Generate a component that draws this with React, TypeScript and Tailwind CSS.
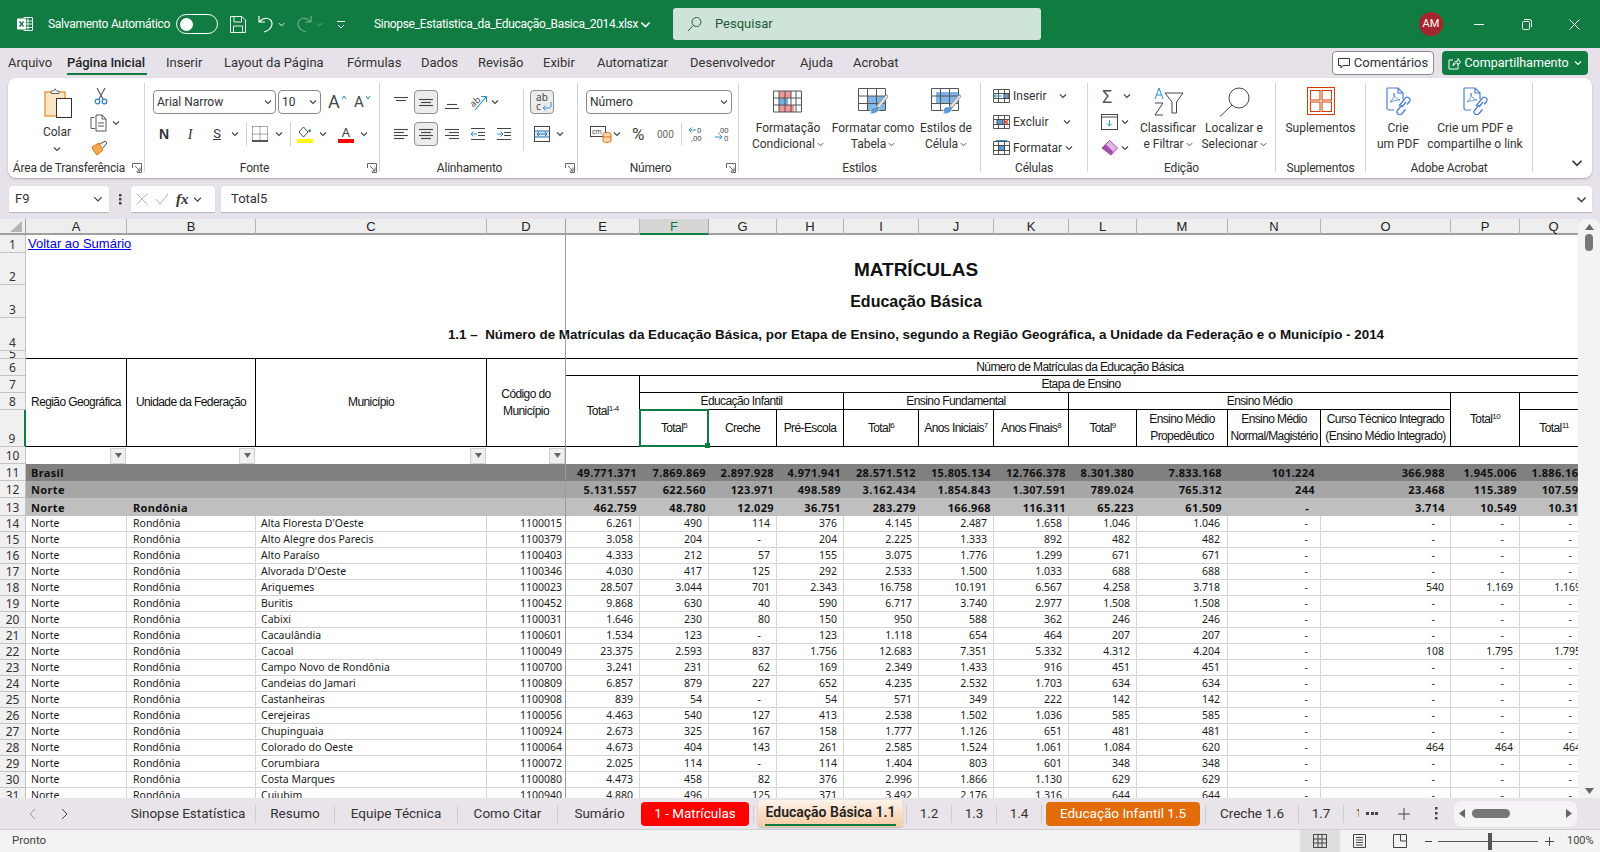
import React from "react";

const Chev = ({ c = "#444", s = 8, className = "" }: { c?: string; s?: number; className?: string }) => (
  <svg width={s} height={s} viewBox="0 0 8 8" className={"inline-block shrink-0 " + className} fill="none" stroke={c} strokeWidth="1.1">
    <path d="M1 2.5 4 5.5 7 2.5" />
  </svg>
);

const Launcher = () => (
  <svg width="10" height="10" viewBox="0 0 10 10" fill="none" stroke="#666" strokeWidth="1" className="absolute bottom-[-1px] right-[2px]">
    <path d="M.5 5V.5H9.5V9.5H5M3 3 8 8M8 4.5V8H4.5" />
  </svg>
);

const Lines = ({ l, c = "#444" }: { l: number[][]; c?: string }) => (
  <svg width="16" height="16" viewBox="0 0 16 16" stroke={c} strokeWidth="1.1" className="shrink-0">
    {l.map((a, i) => (
      <line key={i} x1={a[0]} x2={a[1]} y1={a[2] + 0.5} y2={a[2] + 0.5} />
    ))}
  </svg>
);

const G = ({ w, label, lc = "", launcher, children }: { w: string; label: string; lc?: string; launcher?: boolean; children: React.ReactNode }) => (
  <div className={"relative my-[5px] flex h-[89px] shrink-0 flex-col border-r border-[#d4d4d4] " + w}>
    <div className="min-h-0 flex-1">{children}</div>
    <div className={"-mb-[4px] h-[16px] whitespace-nowrap text-center text-[12px] leading-[16px] tracking-[-0.2px] text-[#333] " + lc}>{label}</div>
    {launcher && <Launcher />}
  </div>
);

const Big = ({ w, icon, t1, t2, chev }: { w: string; icon: React.ReactNode; t1: string; t2?: string; chev?: boolean }) => (
  <div className={"flex shrink-0 flex-col items-center " + w}>
    <div className="flex h-[37px] items-start pt-[4px]">{icon}</div>
    <div className="whitespace-nowrap text-center text-[12px] leading-[16px] text-[#333]">{t1}</div>
    {t2 && (
      <div className="flex items-center gap-[2px] whitespace-nowrap text-center text-[12px] leading-[16px] text-[#333]">
        {t2}
        {chev && <Chev s={7} />}
      </div>
    )}
  </div>
);

const Select = ({ w, t, tc = "" }: { w: string; t: string; tc?: string }) => (
  <div className={"flex h-[24px] shrink-0 items-center justify-between rounded-[4px] border border-[#8a8a8a] bg-white pl-[3px] pr-[3px] text-[12px] " + w + " " + tc}>
    <span className="text-[#333]">{t}</span>
    <Chev />
  </div>
);

const ActiveBtn = ({ children, ml = "" }: { children: React.ReactNode; ml?: string }) => (
  <div className={"flex h-[24px] w-[24px] shrink-0 items-center justify-center rounded-[4px] border border-[#8f8f8f] bg-[#ececec] " + ml}>{children}</div>
);

const GridIcon = ({ fill }: { fill: React.ReactNode }) => (
  <svg width="32" height="28" viewBox="0 0 32 28" fill="none">
    {fill}
    <path d="M1.5 1.5H28.5V23.5H1.5ZM1.5 9H28.5M1.5 16.5H28.5M10.5 1.5V23.5M19.5 1.5V23.5" stroke="#555" />
    <path d="M14 25C12 22 16 19 19 20L30 7 31 9 22 22C22 26 16 27 12 27 13 26.5 14 26 14 25Z" fill="#5b9bd5" stroke="#fff" strokeWidth=".6" />
    <path d="M19.5 19.5 29 8l2 1.5L22 21Z" fill="#e9e9e9" stroke="#777" strokeWidth=".7" />
  </svg>
);

const PdfIcon = () => (
  <svg width="26" height="28" viewBox="0 0 26 28" fill="none" stroke="#4a7fd8" strokeWidth="1.2">
    <path d="M2 1H13L18 6V12M13 1V6H18M9 23H4C3 23 2 22 2 21V1" />
    <path d="M5 15C8 13 10 8 9 6 8 8 11 12 15 13 11 13 8 14 5 15Z" strokeWidth=".8" />
    <path d="M14 19 20 11.5A2.6 2.6 0 0 1 24.5 14.5L22 17.5M17 18 12.5 23.5A2.6 2.6 0 0 0 17 26.5L20.5 22.5M17 20 21 15" strokeWidth="1.3" />
  </svg>
);

const CellRow = ({ icon, t, chevMl }: { icon: React.ReactNode; t: string; chevMl: string }) => (
  <div className="flex h-[26px] items-center">
    {icon}
    <span className="ml-[3px] text-[12px] text-[#333]">{t}</span>
    <Chev className={chevMl} />
  </div>
);

const MiniGrid = ({ children }: { children?: React.ReactNode }) => (
  <svg width="17" height="16" viewBox="0 0 17 16" fill="none" stroke="#444" className="shrink-0">
    <path d="M.5 1.5H16.5V14.5H.5ZM.5 5.5H16.5M.5 10.5H16.5M5.5 1.5V14.5M11.5 1.5V14.5" strokeWidth=".9" />
    {children}
  </svg>
);

const TitleBar = () => (
  <div className="flex h-[48px] shrink-0 items-center bg-[#107c41] text-white">
    <svg width="16" height="16" viewBox="0 0 16 16" fill="none" className="ml-[17px] shrink-0" stroke="#fff">
      <path d="M6.5 1.5H15.5V14.5H6.5M6.5 5H15.5M6.5 8H15.5M6.5 11.5H15.5M11 1.5V14.5" strokeWidth=".9" />
      <rect x=".5" y="3" width="8" height="10" fill="#fff" />
      <path d="M2.5 5.5 6.5 10.5M6.5 5.5 2.5 10.5" stroke="#107c41" strokeWidth="1.4" />
    </svg>
    <span className="ml-[15px] w-[121px] shrink-0 whitespace-nowrap text-[12px] tracking-[-0.28px]">Salvamento Automático</span>
    <div className="ml-[7px] flex h-[20px] w-[42px] shrink-0 items-center rounded-full border border-white pl-[3px]">
      <div className="h-[13px] w-[13px] rounded-full bg-white" />
    </div>
    <svg width="16" height="17" viewBox="0 0 16 17" fill="none" stroke="#fff" className="ml-[12px] shrink-0">
      <path d="M.5.5H12L15.5 4V16.5H.5ZM4 .5V6H11.5V.5M3.5 16.5V10H12.5V16.5" strokeWidth=".9" />
    </svg>
    <svg width="16" height="20" viewBox="0 0 16 20" fill="none" stroke="#fff" strokeWidth="1.2" className="ml-[12px] shrink-0">
      <path d="M1 2V8H7M1.5 8C6 2 14 4 14 10 14 14 10 17 6 18" />
    </svg>
    <Chev c="#fff" s={7} className="ml-[4px]" />
    <svg width="16" height="20" viewBox="0 0 16 20" fill="none" stroke="#6cae8b" strokeWidth="1.2" className="ml-[11px] shrink-0">
      <path d="M15 2V8H9M14.5 8C10 2 2 4 2 10 2 14 6 17 10 18" />
    </svg>
    <Chev c="#6cae8b" s={7} className="ml-[4px]" />
    <svg width="8" height="9" viewBox="0 0 8 9" fill="none" stroke="#fff" className="ml-[14px] shrink-0">
      <path d="M0 1.5H8M1 5 4 8 7 5" />
    </svg>
    <span className="ml-[29px] w-[263px] shrink-0 whitespace-nowrap text-[12px] tracking-[-0.31px]">Sinopse_Estatistica_da_Educação_Basica_2014.xlsx</span>
    <Chev c="#fff" s={11} className="ml-[3px]" />
    <div className="ml-[22px] flex h-[32px] w-[368px] shrink-0 items-center rounded-[3px] bg-[#cfe4d8] pl-[14px] text-[#1b5a3a]">
      <svg width="16" height="16" viewBox="0 0 16 16" fill="none" stroke="#23613f">
        <circle cx="9.5" cy="6" r="4.5" />
        <path d="M6 9.5 1 15" />
      </svg>
      <span className="ml-[12px] text-[13px]">Pesquisar</span>
    </div>
    <div className="ml-[378px] flex h-[24px] w-[24px] shrink-0 items-center justify-center rounded-full bg-[#a4262c] text-[11px]">AM</div>
    <svg width="10" height="10" viewBox="0 0 10 10" stroke="#fff" className="ml-[31px] shrink-0">
      <path d="M0 5.5H10" />
    </svg>
    <svg width="11" height="11" viewBox="0 0 11 11" fill="none" stroke="#fff" className="ml-[37px] shrink-0">
      <rect x="1.5" y="2.5" width="7" height="8" rx="1" />
      <path d="M3 .5H8.5A2 2 0 0 1 10.5 2.5V8" />
    </svg>
    <svg width="11" height="11" viewBox="0 0 11 11" stroke="#fff" className="ml-[37px] shrink-0">
      <path d="M.5.5 10.5 10.5M10.5.5.5 10.5" />
    </svg>
  </div>
);

const menu: [string, string][] = [
  ["Arquivo", "w-[59px]"],
  ["Página Inicial", "w-[99px]"],
  ["Inserir", "w-[58px]"],
  ["Layout da Página", "w-[123px]"],
  ["Fórmulas", "w-[74px]"],
  ["Dados", "w-[57px]"],
  ["Revisão", "w-[65px]"],
  ["Exibir", "w-[54px]"],
  ["Automatizar", "w-[93px]"],
  ["Desenvolvedor", "w-[110px]"],
  ["Ajuda", "w-[53px]"],
  ["Acrobat", "w-[60px]"],
];

const MenuBar = () => (
  <div className="flex h-[30px] shrink-0 items-center pl-[8px] text-[13px] text-[#333]">
    {menu.map(([t, w]) => (
      <div key={t} className={"relative flex h-[30px] shrink-0 items-center whitespace-nowrap " + w}>
        <span className={t === "Página Inicial" ? "font-medium text-[#222]" : ""}>{t}</span>
        {t === "Página Inicial" && <div className="absolute bottom-[3px] left-0 h-[2px] w-[80px] bg-[#107c41]" />}
      </div>
    ))}
    <div className="ml-[419px] flex h-[24px] w-[102px] shrink-0 items-center justify-center gap-[4px] rounded-[4px] border border-[#8a8a8a] bg-white">
      <svg width="12" height="12" viewBox="0 0 12 12" fill="none" stroke="#333">
        <path d="M.5 1.5H11.5V8.5H5L3 11V8.5H.5Z" />
      </svg>
      Comentários
    </div>
    <div className="ml-[8px] flex h-[24px] w-[146px] shrink-0 items-center justify-center gap-[3px] whitespace-nowrap rounded-[4px] bg-[#107c41] text-[12.5px] text-white">
      <svg width="13" height="13" viewBox="0 0 13 13" fill="none" stroke="#fff">
        <path d="M5 3H1V12H10V8M5 9C5 6 7 4 10 4V1.5L12.5 5 10 8V6C8 6 6 7 5 9Z" />
      </svg>
      Compartilhamento
      <Chev c="#fff" s={8} className="ml-[2px]" />
    </div>
  </div>
);

const Ribbon = () => (
  <div className="mx-[8px] flex h-[100px] shrink-0 rounded-[8px] bg-white shadow-[0_1px_2px_rgba(0,0,0,0.25)]">
    <G w="w-[137px]" label="Área de Transferência" lc="pr-[14px]" launcher>
      <div className="flex">
        <div className="ml-[26px] flex w-[46px] flex-col items-center">
          <svg width="30" height="31" viewBox="0 0 30 31" fill="none" className="ml-[1px] mt-[5px]">
            <rect x="2" y="4" width="20" height="24" fill="#fbe6c4" stroke="#e08a1e" strokeWidth="1.2" />
            <path d="M8 5V3H10.5L12 .8 13.5 3H16V5.5H8Z" fill="#fff" stroke="#666" />
            <rect x="13.5" y="10.5" width="15" height="19" fill="#fff" stroke="#333" />
          </svg>
          <span className="mt-[5px] text-[12px] leading-[16px] text-[#333]">Colar</span>
          <Chev className="mt-[5px]" />
        </div>
        <div className="ml-[10px] flex flex-col items-start">
          <svg width="14" height="17" viewBox="0 0 14 17" fill="none" className="ml-[4px] mt-[5px]">
            <path d="M3 0 9 11M11 0 5 11" stroke="#555" strokeWidth="1.1" />
            <circle cx="3.5" cy="13.5" r="2.3" stroke="#2a7fc9" strokeWidth="1.2" />
            <circle cx="10.5" cy="13.5" r="2.3" stroke="#2a7fc9" strokeWidth="1.2" />
          </svg>
          <div className="mt-[9px] flex items-center gap-[5px]">
            <svg width="17" height="18" viewBox="0 0 17 18" fill="none" stroke="#444">
              <path d="M4.5 3.5H1V14.5H5M6 1H12L16 5V17H6ZM12 1V5H16M8 9H14M8 12H14" strokeWidth=".9" />
            </svg>
            <Chev />
          </div>
          <svg width="17" height="16" viewBox="0 0 17 16" className="ml-[1px] mt-[8px]" fill="none">
            <path d="M1 7 8 3 12 10 6 15C4 13 2 10 1 7Z" fill="#f4a84a" stroke="#d8731a" />
            <path d="M9 4 14 1 16 3 12 8" fill="#eee" stroke="#555" />
          </svg>
        </div>
      </div>
    </G>
    <G w="w-[235px]" label="Fonte" lc="pr-[15px]" launcher>
      <div className="mt-[7px] flex items-center pl-[8px]">
        <Select w="w-[123px]" t="Arial Narrow" />
        <div className="ml-[2px]">
          <Select w="w-[43px]" t="10" />
        </div>
        <div className="ml-[7px] flex w-[13px] items-start text-[18px] leading-none text-[#444]">A</div>
        <svg width="6" height="5" viewBox="0 0 6 5" fill="none" stroke="#2a7fc9" className="mb-[10px]"><path d="M1 4 3 1 5 4" /></svg>
        <div className="ml-[7px] w-[11px] text-[15px] leading-none text-[#444]">A</div>
        <svg width="6" height="5" viewBox="0 0 6 5" fill="none" stroke="#2a7fc9" className="mb-[10px]"><path d="M1 1 3 4 5 1" /></svg>
      </div>
      <div className="mt-[8px] flex h-[24px] items-center pl-[8px] text-[#333]">
        <span className="w-[22px] text-center font-['Liberation_Sans'] text-[14px] font-bold">N</span>
        <span className="w-[30px] text-center font-['Liberation_Serif'] text-[14px] italic">I</span>
        <span className="w-[24px] text-center text-[13px] underline">S</span>
        <span className="flex w-[12px] justify-center"><Chev /></span>
        <div className="ml-[5px] h-[24px] w-px bg-[#d4d4d4]" />
        <svg width="16" height="16" viewBox="0 0 16 16" fill="none" className="ml-[5px]">
          <path d="M.5.5H15.5V15M.5 .5V15M8 .5V15M.5 8H15.5" stroke="#555" strokeDasharray="1 1" />
          <path d="M0 15H16" stroke="#111" strokeWidth="1.4" />
        </svg>
        <span className="ml-[5px] flex w-[12px] justify-center"><Chev /></span>
        <div className="ml-[5px] h-[24px] w-px bg-[#d4d4d4]" />
        <div className="ml-[6px] flex w-[16px] flex-col items-center">
          <svg width="14" height="12" viewBox="0 0 14 12" fill="none">
            <path d="M5.5 1 10 6 5.5 11 1 6Z" stroke="#444" />
            <path d="M11 6C9.5 6 11 3 12 3 13.500 4 13 7 11 6Z" fill="#1f6fb5" />
          </svg>
          <div className="mt-[1px] h-[4px] w-[16px] bg-[#ffff00]" />
        </div>
        <span className="ml-[4px] flex w-[12px] justify-center"><Chev /></span>
        <div className="ml-[9px] flex w-[16px] flex-col items-center">
          <span className="h-[12px] font-['Noto_Sans'] text-[13px] leading-[12px] text-[#444]">A</span>
          <div className="mt-[1px] h-[4px] w-[16px] bg-[#ff0000]" />
        </div>
        <span className="ml-[4px] flex w-[12px] justify-center"><Chev /></span>
      </div>
    </G>
    <G w="w-[198px]" label="Alinhamento" lc="pr-[18px]" launcher>
      <div className="flex">
        <div className="w-[143px] shrink-0">
          <div className="mt-[7px] flex h-[24px] items-center pl-[13px]">
            <Lines l={[[1, 15, 3], [3, 13, 6]]} />
            <ActiveBtn ml="ml-[5px]"><Lines l={[[1, 15, 5], [3, 13, 8], [1, 15, 11]]} /></ActiveBtn>
            <div className="ml-[6px]"><Lines l={[[3, 13, 10], [1, 15, 14]]} /></div>
            <svg width="18" height="17" viewBox="0 0 18 17" fill="none" className="ml-[10px]">
              <text x="0" y="11" fontSize="9" fill="#444" transform="rotate(-40 5 8)" fontFamily="Noto Sans">ab</text>
              <path d="M5 16 16 3M11 2.500H16.500V8" stroke="#2a8fd0" strokeWidth="1.1" />
            </svg>
            <Chev className="ml-[3px]" />
          </div>
          <div className="mt-[8px] flex h-[24px] items-center pl-[13px]">
            <Lines l={[[1, 15, 3], [1, 11, 6], [1, 15, 9], [1, 11, 12]]} />
            <ActiveBtn ml="ml-[5px]"><Lines l={[[1, 15, 3], [3, 13, 6], [1, 15, 9], [3, 13, 12]]} /></ActiveBtn>
            <div className="ml-[6px]"><Lines l={[[1, 15, 3], [5, 15, 6], [1, 15, 9], [5, 15, 12]]} /></div>
            <svg width="16" height="16" viewBox="0 0 16 16" fill="none" className="ml-[10px]" stroke="#444">
              <path d="M1 2.500H15M8 6.500H15M8 9.500H15M1 13.500H15" />
              <path d="M7 8H1M3.500 5.500 1 8 3.500 10.500" stroke="#2a8fd0" />
            </svg>
            <svg width="16" height="16" viewBox="0 0 16 16" fill="none" className="ml-[10px]" stroke="#444">
              <path d="M1 2.500H15M8 6.500H15M8 9.500H15M1 13.500H15" />
              <path d="M1 8H7M4.500 5.500 7 8 4.500 10.500" stroke="#2a8fd0" />
            </svg>
          </div>
        </div>
        <div className="mt-[6px] h-[62px] w-px shrink-0 bg-[#d4d4d4]" />
        <div className="shrink-0 pl-[6px]">
          <div className="mt-[7px]">
            <ActiveBtn>
              <div className="relative font-['Noto_Sans'] text-[10px] leading-[9px] text-[#444]">
                ab<br />c
                <svg width="10" height="9" viewBox="0 0 10 9" fill="none" stroke="#2a8fd0" className="absolute bottom-0 left-[6px]"><path d="M9 0V4C9 6 7 6 5 6H1M3.500 3.500 1 6 3.500 8.500" /></svg>
              </div>
            </ActiveBtn>
          </div>
          <div className="mt-[8px] flex h-[24px] items-center pl-[4px]">
            <svg width="16" height="16" viewBox="0 0 16 16" fill="none">
              <rect x=".5" y=".5" width="15" height="15" stroke="#444" />
              <rect x="1" y="5" width="14" height="6" fill="#dcebf7" />
              <path d="M.5 5H15.500M.5 11H15.500" stroke="#1f6fb5" />
              <path d="M3 8H13M5 6 3 8 5 10M11 6 13 8 11 10" stroke="#1f6fb5" />
            </svg>
            <Chev className="ml-[6px]" />
          </div>
        </div>
      </div>
    </G>
    <G w="w-[161px]" label="Número" lc="pr-[15px]" launcher>
      <div className="mt-[7px] pl-[8px]">
        <Select w="w-[146px]" t="Número" />
      </div>
      <div className="mt-[8px] flex h-[24px] items-center pl-[12px] text-[#444]">
        <svg width="22" height="18" viewBox="0 0 22 18" fill="none">
          <rect x=".5" y="1.500" width="15" height="10" stroke="#444" />
          <text x="2" y="9" fontSize="7" fill="#444" fontFamily="Noto Sans">cm</text>
          <path d="M13 9C13 7 21 7 21 9V16C21 18 13 18 13 16Z" fill="#fbd7a8" stroke="#d8731a" />
          <path d="M13 12H21" stroke="#d8731a" />
        </svg>
        <Chev className="ml-[1px]" />
        <span className="ml-[11px] w-[17px] text-[17px] leading-none">%</span>
        <span className="ml-[8px] w-[18px] text-[10px] text-[#666]">000</span>
        <div className="ml-[6px] h-[22px] w-px bg-[#d4d4d4]" />
        <svg width="17" height="16" viewBox="0 0 17 16" fill="none" className="ml-[6px]">
          <path d="M8 4H1M3.500 1.500 1 4 3.500 6.500" stroke="#2a8fd0" />
          <text x="9" y="7" fontSize="7.500" fill="#444" fontFamily="Noto Sans">0</text>
          <text x="3" y="15" fontSize="7.500" fill="#444" fontFamily="Noto Sans">,00</text>
        </svg>
        <svg width="17" height="16" viewBox="0 0 17 16" fill="none" className="ml-[9px]">
          <path d="M1 11H8M5.500 8.500 8 11 5.500 13.500" stroke="#2a8fd0" />
          <text x="4" y="7" fontSize="7.500" fill="#444" fontFamily="Noto Sans">,00</text>
          <text x="10" y="15" fontSize="7.500" fill="#444" fontFamily="Noto Sans">0</text>
        </svg>
      </div>
    </G>
    <G w="w-[242px]" label="Estilos">
      <div className="flex pl-[6px]">
        <Big
          w="w-[86px]"
          t1="Formatação"
          t2="Condicional"
          chev
          icon={
            <svg width="30" height="24" viewBox="0 0 30 24" fill="none" className="mt-[3px]">
              <rect x="6" y="1" width="12" height="7" fill="#f4969b" />
              <rect x="6" y="8" width="9" height="7" fill="#6fb1e4" />
              <rect x="6" y="15" width="15" height="7" fill="#f4969b" />
              <path d="M.5 1H28.500V22H.5ZM.5 8H28.500M.5 15H28.500M6 1V22M12 1V22M18 1V22M23 1V22" stroke="#555" />
            </svg>
          }
        />
        <Big w="w-[84px]" t1="Formatar como" t2="Tabela" chev icon={<GridIcon fill={<rect x="10" y="9" width="18" height="14" fill="#7fb4e6" />} />} />
        <Big w="w-[62px]" t1="Estilos de" t2="Célula" chev icon={<GridIcon fill={<rect x="6" y="5" width="22" height="12" fill="#7fb4e6" />} />} />
      </div>
    </G>
    <G w="w-[107px]" label="Células">
      <div className="flex flex-col pl-[12px]">
        <CellRow t="Inserir" chevMl="ml-[12px]" icon={<MiniGrid><path d="M9 8H1M3.500 5.500 1 8 3.500 10.500" stroke="#2a8fd0" /><rect x="11" y="5.500" width="5" height="5" fill="#5b9bd5" /></MiniGrid>} />
        <CellRow t="Excluir" chevMl="ml-[15px]" icon={<MiniGrid><rect x="4" y="5.500" width="6" height="5" fill="#5b9bd5" /><path d="M11 6 15 10M15 6 11 10" stroke="#e0413a" strokeWidth="1.300" /></MiniGrid>} />
        <CellRow t="Formatar" chevMl="ml-[3px]" icon={<MiniGrid><rect x="5.500" y="5.500" width="6" height="5" fill="#5b9bd5" /><path d="M3 .5H14" stroke="#2a8fd0" /></MiniGrid>} />
      </div>
    </G>
    <G w="w-[188px]" label="Edição">
      <div className="flex">
        <div className="ml-[13px] flex w-[33px] shrink-0 flex-col">
          <div className="flex h-[26px] items-center gap-[7px]">
            <span className="ml-[1px] w-[14px] font-['Noto_Sans'] text-[18px] leading-none text-[#555]">Σ</span>
            <Chev />
          </div>
          <div className="flex h-[26px] items-center gap-[3px]">
            <svg width="17" height="16" viewBox="0 0 17 16" fill="none">
              <rect x=".5" y=".5" width="16" height="15" stroke="#444" />
              <path d="M.5 3H16.500" stroke="#444" />
              <path d="M8.500 6V12M6 9.500 8.500 12 11 9.500" stroke="#2a8fd0" />
            </svg>
            <Chev />
          </div>
          <div className="flex h-[26px] items-center gap-[3px]">
            <svg width="17" height="16" viewBox="0 0 17 16" fill="none">
              <path d="M8.500 .5 16.500 8 10 15 1 8Z" fill="#e3b8e6" stroke="#a74cb0" />
              <path d="M1 8 5 4.500 12 11.500 10 15Z" fill="#a74cb0" />
            </svg>
            <Chev />
          </div>
        </div>
        <Big
          w="w-[68px]"
          t1="Classificar"
          t2="e Filtrar"
          chev
          icon={
            <svg width="31" height="29" viewBox="0 0 31 29" fill="none">
              <path d="M2 12 6 1 10 12M3.500 8H8.500" stroke="#2a8fd0" />
              <path d="M2 16H10L2 28H10" stroke="#444" />
              <path d="M12 6H30L23.500 15V26H19V15Z" stroke="#444" />
            </svg>
          }
        />
        <Big
          w="w-[64px]"
          t1="Localizar e"
          t2="Selecionar"
          chev
          icon={
            <svg width="31" height="30" viewBox="0 0 31 30" fill="none" stroke="#444">
              <circle cx="20" cy="11" r="10" />
              <path d="M13 18 1 29.500" />
            </svg>
          }
        />
      </div>
    </G>
    <G w="w-[90px]" label="Suplementos">
      <Big
        w="w-full"
        t1="Suplementos"
        icon={
          <svg width="28" height="28" viewBox="0 0 28 28" fill="none" stroke="#d83b01">
            <rect x=".5" y=".5" width="27" height="27" />
            <rect x="3.500" y="3.500" width="9.500" height="9.500" />
            <rect x="15" y="3.500" width="9.500" height="9.500" />
            <rect x="3.500" y="15" width="9.500" height="9.500" />
            <rect x="15" y="15" width="9.500" height="9.500" />
          </svg>
        }
      />
    </G>
    <G w="w-[167px]" label="Adobe Acrobat">
      <div className="flex">
        <Big w="w-[64px]" t1="Crie" t2="um PDF" icon={<PdfIcon />} />
        <Big w="w-[90px]" t1="Crie um PDF e" t2="compartilhe o link" icon={<PdfIcon />} />
      </div>
    </G>
    <div className="flex flex-1 items-end justify-end pb-[9px] pr-[9px]">
      <Chev s={12} c="#333" />
    </div>
  </div>
);

const FormulaBar = () => (
  <div className="mt-[8px] flex h-[26px] shrink-0 items-stretch pl-[9px] text-[13px] text-[#333]">
    <div className="flex w-[100px] items-center justify-between rounded-t-[4px] bg-white pl-[6px] pr-[6px] shadow-[0_1px_1px_rgba(0,0,0,0.2)]">
      F9 <Chev s={10} />
    </div>
    <div className="flex w-[22px] items-center justify-center">
      <svg width="3" height="11" viewBox="0 0 3 11" fill="#444"><rect width="2.500" height="2.500" /><rect y="4" width="2.500" height="2.500" /><rect y="8" width="2.500" height="2.500" /></svg>
    </div>
    <div className="flex w-[84px] items-center rounded-t-[4px] bg-white pl-[5px] shadow-[0_1px_1px_rgba(0,0,0,0.2)]">
      <svg width="12" height="12" viewBox="0 0 12 12" stroke="#b5b5b5"><path d="M.5.5 11.500 11.500M11.500.5.5 11.500" /></svg>
      <svg width="14" height="12" viewBox="0 0 14 12" fill="none" stroke="#b5b5b5" className="ml-[7px]"><path d="M1 6 5 11 13 1" /></svg>
      <span className="ml-[7px] font-['Liberation_Serif'] text-[15px] font-bold italic leading-none text-[#333]">fx</span>
      <Chev className="ml-[4px]" s={9} />
    </div>
    <div className="ml-[6px] flex w-[1371px] items-center justify-between rounded-t-[4px] bg-white pl-[10px] pr-[5px] shadow-[0_1px_1px_rgba(0,0,0,0.2)]">
      Total5 <Chev s={11} />
    </div>
  </div>
);

const cols = ["A", "B", "C", "D", "E", "F", "G", "H", "I", "J", "K", "L", "M", "N", "O", "P", "Q"];

const RH = ({ n, cls = "" }: { n: number; cls?: string }) => (
  <td className={"border-b border-r border-[#c4c4c4] bg-[#f0f0f0] p-0 text-center align-bottom font-['Noto_Sans'] text-[12px] leading-none text-[#333] " + (n === 9 ? "border-r-2 border-r-[#107c41] bg-[#d6d6d6] text-[#107c41] " : "") + cls}>
    {n === 5 ? <div className="h-[7px] overflow-hidden leading-[6px]">5</div> : <div className="pb-[1px]">{n}</div>}
  </td>
);

const hdBase = "p-0 text-center font-['Liberation_Sans'] text-[12px] tracking-[-0.6px] text-[#111] whitespace-nowrap ";
const hd = hdBase + "border-b border-r border-black leading-[17px] overflow-hidden";
const hdS = hdBase + "border-b border-r border-black leading-[16px] overflow-hidden";
const hdSNoR = hdBase + "border-b border-black leading-[16px] overflow-hidden";
const hdNoR = hdBase + "border-b border-black leading-[17px] overflow-hidden";

const Sup = ({ t }: { t: string }) => <sup className="text-[8px] leading-none">{t}</sup>;

const Filter = () => (
  <div className="flex h-[16px] justify-end pr-[1px]">
    <div className="flex h-[16px] w-[16px] items-center justify-center border border-[#d0d0d0] bg-[#f0f0f0]">
      <svg width="7" height="5" viewBox="0 0 7 5" fill="#666"><path d="M0 0H7L3.500 5Z" /></svg>
    </div>
  </div>
);

const boldRows: { n: number; a: string; b: string; bg: string; v: string[]; h: string }[] = [
  { n: 11, a: "Brasil", b: "", bg: "bg-[#808080]", h: "h-[17px]", v: ["49.771.371", "7.869.869", "2.897.928", "4.971.941", "28.571.512", "15.805.134", "12.766.378", "8.301.380", "7.833.168", "101.224", "366.988", "1.945.006", "1.886.167"] },
  { n: 12, a: "Norte", b: "", bg: "bg-[#a6a6a6]", h: "h-[17px]", v: ["5.131.557", "622.560", "123.971", "498.589", "3.162.434", "1.854.843", "1.307.591", "789.024", "765.312", "244", "23.468", "115.389", "107.598"] },
  { n: 13, a: "Norte", b: "Rondônia", bg: "bg-[#bfbfbf]", h: "h-[18px]", v: ["462.759", "48.780", "12.029", "36.751", "283.279", "166.968", "116.311", "65.223", "61.509", "-", "3.714", "10.549", "10.310"] },
];

const R = (s: string) => s.split(" ");
const rows: [string, string, string][] = [
  ["Alta Floresta D'Oeste", "1100015", "6.261 490 114 376 4.145 2.487 1.658 1.046 1.046 - - - -"],
  ["Alto Alegre dos Parecis", "1100379", "3.058 204 - 204 2.225 1.333 892 482 482 - - - -"],
  ["Alto Paraíso", "1100403", "4.333 212 57 155 3.075 1.776 1.299 671 671 - - - -"],
  ["Alvorada D'Oeste", "1100346", "4.030 417 125 292 2.533 1.500 1.033 688 688 - - - -"],
  ["Ariquemes", "1100023", "28.507 3.044 701 2.343 16.758 10.191 6.567 4.258 3.718 - 540 1.169 1.169"],
  ["Buritis", "1100452", "9.868 630 40 590 6.717 3.740 2.977 1.508 1.508 - - - -"],
  ["Cabixi", "1100031", "1.646 230 80 150 950 588 362 246 246 - - - -"],
  ["Cacaulândia", "1100601", "1.534 123 - 123 1.118 654 464 207 207 - - - -"],
  ["Cacoal", "1100049", "23.375 2.593 837 1.756 12.683 7.351 5.332 4.312 4.204 - 108 1.795 1.795"],
  ["Campo Novo de Rondônia", "1100700", "3.241 231 62 169 2.349 1.433 916 451 451 - - - -"],
  ["Candeias do Jamari", "1100809", "6.857 879 227 652 4.235 2.532 1.703 634 634 - - - -"],
  ["Castanheiras", "1100908", "839 54 - 54 571 349 222 142 142 - - - -"],
  ["Cerejeiras", "1100056", "4.463 540 127 413 2.538 1.502 1.036 585 585 - - - -"],
  ["Chupinguaia", "1100924", "2.673 325 167 158 1.777 1.126 651 481 481 - - - -"],
  ["Colorado do Oeste", "1100064", "4.673 404 143 261 2.585 1.524 1.061 1.084 620 - 464 464 464"],
  ["Corumbiara", "1100072", "2.025 114 - 114 1.404 803 601 348 348 - - - -"],
  ["Costa Marques", "1100080", "4.473 458 82 376 2.996 1.866 1.130 629 629 - - - -"],
  ["Cujubim", "1100940", "4.880 496 125 371 3.492 2.176 1.316 644 644 - - - -"],
];

const dataCell = "border-b border-r border-[#d4d4d4] p-0 font-['Noto_Sans'] text-[10.5px] leading-none text-[#1a1a1a] whitespace-nowrap overflow-hidden";
const boldCell = "p-0 font-['Noto_Sans'] text-[11px] font-bold leading-none tracking-[0.35px] text-[#111] whitespace-nowrap overflow-hidden";

const Sheet = () => (
  <div className="mt-[7px] flex h-[579px] shrink-0">
    <div className="relative h-[579px] w-[1578px] shrink-0 overflow-hidden bg-white">
      <table className="w-[1588px] table-fixed border-separate border-spacing-0">
        <colgroup>
          <col className="w-[26px]" /><col className="w-[101px]" /><col className="w-[129px]" /><col className="w-[231px]" /><col className="w-[79px]" />
          <col className="w-[74px]" /><col className="w-[69px]" /><col className="w-[68px]" /><col className="w-[67px]" /><col className="w-[75px]" /><col className="w-[75px]" /><col className="w-[75px]" />
          <col className="w-[68px]" /><col className="w-[91px]" /><col className="w-[93px]" /><col className="w-[130px]" /><col className="w-[69px]" /><col className="w-[68px]" />
        </colgroup>
        <tbody>
          <tr className="h-[16px]">
            <td className="border-b-2 border-r border-[#a0a0a0] bg-[#eeeeee] p-0">
              <svg width="25" height="14" viewBox="0 0 25 14" fill="#b4b4b4" className="block"><path d="M22 2V13H10Z" /></svg>
            </td>
            {cols.map((c) => (
              <td key={c} className={"border-b-2 border-r p-0 text-center font-['Liberation_Sans'] text-[13px] leading-none " + (c === "F" ? "border-b-[#107c41] border-r-[#a8a8a8] bg-[#d6d6d6] text-[#107c41]" : "border-b-[#a0a0a0] border-r-[#b4b4b4] bg-[#eeeeee] text-[#222]")}>
                {c}
              </td>
            ))}
          </tr>
          <tr className="h-[18px]">
            <RH n={1} />
            <td colSpan={17} className="p-0 pl-[2px] pt-[1px] align-top font-['Liberation_Sans'] text-[13px] leading-[16px] text-[#0000ee] underline">Voltar ao Sumário</td>
          </tr>
          <tr className="h-[32px]">
            <RH n={2} />
            <td colSpan={17} className="p-0 pl-[218px] text-center font-['Liberation_Sans'] text-[19px] font-bold leading-none text-[#111]">MATRÍCULAS</td>
          </tr>
          <tr className="h-[33px]">
            <RH n={3} />
            <td colSpan={17} className="p-0 pl-[218px] text-center font-['Liberation_Sans'] text-[16px] font-bold leading-none text-[#111]">Educação Básica</td>
          </tr>
          <tr className="h-[33px]">
            <RH n={4} />
            <td colSpan={17} className="whitespace-pre p-0 pl-[218px] text-center font-['Liberation_Sans'] text-[13.4px] font-bold leading-none text-[#111]">1.1 –  Número de Matrículas da Educação Básica, por Etapa de Ensino, segundo a Região Geográfica, a Unidade da Federação e o Município - 2014</td>
          </tr>
          <tr className="h-[8px]">
            <RH n={5} />
            <td colSpan={17} className="h-[8px] border-b border-black p-0" />
          </tr>
          <tr className="h-[17px]">
            <RH n={6} />
            <td rowSpan={4} className={hd}>Região Geográfica</td>
            <td rowSpan={4} className={hd}>Unidade da Federação</td>
            <td rowSpan={4} className={hd}>Município</td>
            <td rowSpan={4} className={hd}>Código do<br />Município</td>
            <td colSpan={13} className={hdSNoR + " pl-[6px]"}>Número de Matrículas da Educação Básica</td>
          </tr>
          <tr className="h-[17px]">
            <RH n={7} />
            <td rowSpan={3} className={hd}>Total<Sup t="1-4" /></td>
            <td colSpan={12} className={hdSNoR + " pr-[66px]"}>Etapa de Ensino</td>
          </tr>
          <tr className="h-[17px]">
            <RH n={8} />
            <td colSpan={3} className={hdS}>Educação Infantil</td>
            <td colSpan={3} className={hdS}>Ensino Fundamental</td>
            <td colSpan={4} className={hdS}>Ensino Médio</td>
            <td rowSpan={2} className={hd}>Total<Sup t="10" /></td>
            <td className={hdSNoR} />
          </tr>
          <tr className="h-[37px]">
            <RH n={9} />
            <td className={hdBase + "relative border-b border-r border-black leading-[17px]"}>
              Total<Sup t="5" />
              <div className="absolute -left-[1px] -top-[1px] bottom-[-1px] right-[-1px] z-10 border-2 border-[#107c41]">
                <div className="absolute -bottom-[3px] -right-[3px] h-[5px] w-[5px] bg-[#107c41]" />
              </div>
            </td>
            <td className={hd}>Creche</td>
            <td className={hd}>Pré-Escola</td>
            <td className={hd}>Total<Sup t="6" /></td>
            <td className={hd}>Anos Iniciais<Sup t="7" /></td>
            <td className={hd}>Anos Finais<Sup t="8" /></td>
            <td className={hd}>Total<Sup t="9" /></td>
            <td className={hd}>Ensino Médio<br />Propedêutico</td>
            <td className={hd}>Ensino Médio<br />Normal/Magistério</td>
            <td className={hd}>Curso Técnico Integrado<br />(Ensino Médio Integrado)</td>
            <td className={hdNoR}>Total<Sup t="11" /></td>
          </tr>
          <tr className="h-[17px]">
            <RH n={10} />
            <td className="p-0"><Filter /></td>
            <td className="p-0"><Filter /></td>
            <td className="p-0"><Filter /></td>
            <td className="p-0"><Filter /></td>
            <td colSpan={13} className="p-0" />
          </tr>
          {boldRows.map((r) => (
            <tr key={r.n} className={r.h}>
              <RH n={r.n} />
              <td className={boldCell + " pl-[5px] " + r.bg}>{r.a}</td>
              <td className={boldCell + " pl-[6px] " + r.bg}>{r.b}</td>
              <td className={boldCell + " " + r.bg} />
              <td className={boldCell + " " + r.bg} />
              {r.v.map((v, i) => (
                <td key={i} className={boldCell + " text-right " + r.bg + " " + (v === "-" ? "pr-[12px]" : i >= 8 && i <= 10 ? "pr-[6px]" : "pr-[3px]")}>{v}</td>
              ))}
            </tr>
          ))}
          {rows.map((r, k) => (
            <tr key={k} className="h-[16px]">
              <RH n={14 + k} />
              <td className={dataCell + " pl-[5px]"}>Norte</td>
              <td className={dataCell + " pl-[6px]"}>Rondônia</td>
              <td className={dataCell + " pl-[5px]"}>{r[0]}</td>
              <td className={dataCell + " pr-[3px] text-right"}>{r[1]}</td>
              {R(r[2]).map((v, i) => (
                <td key={i} className={dataCell + " text-right " + (v === "-" ? (i === 9 ? "pr-[12px]" : "pr-[15px]") : i === 8 ? "pr-[7px]" : "pr-[6px]")}>{v}</td>
              ))}
            </tr>
          ))}
        </tbody>
      </table>
      <div className="absolute bottom-0 left-[565px] top-0 w-px bg-[#9a9a9a]" />
    </div>
    <div className="flex w-[22px] shrink-0 flex-col items-center rounded-t-[8px] bg-[#f3f3f3] pt-[5px]">
      <svg width="9" height="6" viewBox="0 0 9 6" fill="#666"><path d="M0 6 4.500 0 9 6Z" /></svg>
      <div className="mt-[4px] h-[17px] w-[8px] rounded-full bg-[#777]" />
      <div className="flex-1" />
      <svg width="9" height="6" viewBox="0 0 9 6" fill="#666" className="mb-[4px]"><path d="M0 0H9L4.500 6Z" /></svg>
    </div>
  </div>
);

const Sep = ({ ml = "ml-[0px]" }: { ml?: string }) => <div className={"h-[18px] w-px shrink-0 bg-[#cfcbd1] " + ml} />;

const TabT = ({ t, w }: { t: string; w: string }) => <div className={"shrink-0 whitespace-nowrap text-center " + w}>{t}</div>;

const Tabs = () => (
  <div className="flex h-[32px] shrink-0 items-center border-b border-[#cfcfcf] bg-[#e9e3ea] text-[13.5px] text-[#333]">
    <svg width="7" height="12" viewBox="0 0 7 12" fill="none" stroke="#999" className="ml-[29px] shrink-0"><path d="M6 1 1 6 6 11" /></svg>
    <svg width="7" height="12" viewBox="0 0 7 12" fill="none" stroke="#444" className="ml-[25px] shrink-0"><path d="M1 1 6 6 1 11" /></svg>
    <TabT t="Sinopse Estatística" w="ml-[53px] w-[134px]" />
    <Sep />
    <TabT t="Resumo" w="w-[78px]" />
    <Sep />
    <TabT t="Equipe Técnica" w="w-[122px]" />
    <Sep />
    <TabT t="Como Citar" w="w-[99px]" />
    <Sep />
    <TabT t="Sumário" w="w-[83px]" />
    <div className="flex h-[24px] w-[108px] shrink-0 items-center justify-center rounded-[4px] bg-[#ff0000] text-white">1 - Matrículas</div>
    <Sep ml="ml-[4px]" />
    <div className="ml-[4px] flex h-[27px] w-[145px] shrink-0 items-center justify-center rounded-[4px] bg-gradient-to-b from-[#fdf3ea] to-[#f5c9a2] pb-[2px] text-[14px] font-semibold text-[#222] shadow-[0_1px_2px_rgba(0,0,0,0.2)]">
      <span className="relative whitespace-nowrap">
        Educação Básica 1.1
        <span className="absolute -bottom-[3px] left-0 right-0 h-[2px] bg-[#107c41]" />
      </span>
    </div>
    <Sep ml="ml-[3px]" />
    <TabT t="1.2" w="w-[44px]" />
    <Sep />
    <TabT t="1.3" w="w-[44px]" />
    <Sep />
    <TabT t="1.4" w="w-[44px]" />
    <Sep />
    <div className="ml-[4px] flex h-[24px] w-[154px] shrink-0 items-center justify-center whitespace-nowrap rounded-[4px] bg-[#e36c0a] text-white">Educação Infantil 1.5</div>
    <Sep ml="ml-[5px]" />
    <TabT t="Creche 1.6" w="w-[92px]" />
    <Sep />
    <TabT t="1.7" w="w-[44px]" />
    <Sep />
    <div className="ml-[12px] w-[3px] shrink-0 overflow-hidden text-[10px]">1</div>
    <div className="ml-[7px] flex w-[12px] shrink-0 justify-between">
      <div className="h-[3px] w-[3px] bg-[#444]" /><div className="h-[3px] w-[3px] bg-[#444]" /><div className="h-[3px] w-[3px] bg-[#444]" />
    </div>
    <svg width="12" height="12" viewBox="0 0 12 12" stroke="#444" className="ml-[20px] shrink-0"><path d="M6 0V12M0 6H12" /></svg>
    <svg width="3" height="13" viewBox="0 0 3 13" fill="#444" className="ml-[25px] shrink-0"><rect width="2.500" height="2.500" /><rect y="5" width="2.500" height="2.500" /><rect y="10" width="2.500" height="2.500" /></svg>
    <div className="ml-[16px] flex h-[26px] w-[123px] shrink-0 items-center rounded-[8px] bg-[#f6f3f6] pl-[5px]">
      <svg width="6" height="9" viewBox="0 0 6 9" fill="#666"><path d="M6 0V9L0 4.500Z" /></svg>
      <div className="ml-[7px] h-[9px] w-[38px] rounded-full bg-[#777]" />
      <div className="flex-1" />
      <svg width="6" height="9" viewBox="0 0 6 9" fill="#666" className="mr-[5px]"><path d="M0 0V9L6 4.500Z" /></svg>
    </div>
  </div>
);

const Status = () => (
  <div className="flex h-[22px] shrink-0 items-center bg-[#f3f3f3] pl-[12px] text-[11.500px] text-[#444]">
    <span className="w-[1288px] shrink-0">Pronto</span>
    <div className="flex h-[22px] w-[40px] shrink-0 items-center justify-center bg-[#dedede]">
      <svg width="14" height="14" viewBox="0 0 14 14" fill="none" stroke="#444"><path d="M.5.5H13.500V13.500H.5ZM.5 5H13.500M.5 9H13.500M5 .5V13.500M9 .5V13.500" /></svg>
    </div>
    <svg width="13" height="14" viewBox="0 0 13 14" fill="none" stroke="#444" className="ml-[13px] shrink-0"><path d="M.5.5H12.500V13.500H.5ZM3 3.500H10M3 6H10M3 8.500H10M3 11H10" /></svg>
    <svg width="14" height="14" viewBox="0 0 14 14" fill="none" stroke="#444" className="ml-[27px] shrink-0"><path d="M.5.5H13.500V13.500H.5ZM7.500.5V7H13.500" /></svg>
    <svg width="7" height="1" viewBox="0 0 7 1" stroke="#444" className="ml-[18px] shrink-0"><path d="M0 .5H7" /></svg>
    <div className="relative ml-[6px] h-px w-[100px] shrink-0 bg-[#555]">
      <div className="absolute left-[50px] top-[-8px] h-[17px] w-[4px] bg-[#555]" />
    </div>
    <svg width="9" height="9" viewBox="0 0 9 9" stroke="#444" className="ml-[7px] shrink-0"><path d="M4.500 0V9M0 4.500H9" /></svg>
    <span className="ml-[13px] text-[11px]">100%</span>
  </div>
);

export default function App() {
  return (
    <div className="flex h-[852px] w-[1600px] flex-col overflow-hidden bg-[#e7e2e9] font-['Roboto',sans-serif]">
      <TitleBar />
      <MenuBar />
      <Ribbon />
      <FormulaBar />
      <Sheet />
      <Tabs />
      <Status />
    </div>
  );
}
